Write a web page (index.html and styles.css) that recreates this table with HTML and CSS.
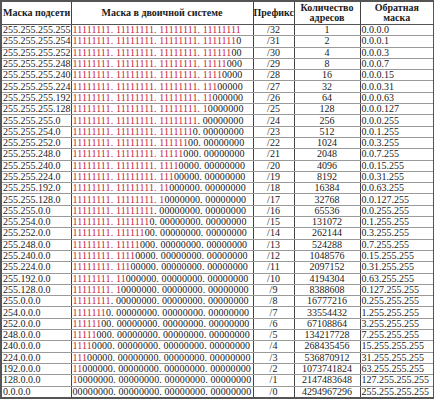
FILE: index.html
```html
<!DOCTYPE html>
<html lang="ru">
<head>
<meta charset="utf-8">
<link rel="stylesheet" href="styles.css">
</head>
<body>
<table class="masks">
<colgroup>
<col class="c1"><col class="c2"><col class="c3"><col class="c4"><col class="c5">
</colgroup>
<thead>
<tr><th class="hl">Маска подсети</th><th>Маска в двоичной системе</th><th class="hp">Префикс</th><th>Количество<br>адресов</th><th>Обратная<br>маска</th></tr>
</thead>
<tbody>
<tr><td>255.255.255.255</td><td class="bin"><span class="r">11111111. 11111111. 11111111. 11111111</span></td><td class="c">/32</td><td class="c">1</td><td>0.0.0.0</td></tr>
<tr><td>255.255.255.254</td><td class="bin"><span class="r">11111111. 11111111. 11111111. 1111111</span>0</td><td class="c">/31</td><td class="c">2</td><td>0.0.0.1</td></tr>
<tr><td>255.255.255.252</td><td class="bin"><span class="r">11111111. 11111111. 11111111. 111111</span>00</td><td class="c">/30</td><td class="c">4</td><td>0.0.0.3</td></tr>
<tr><td>255.255.255.248</td><td class="bin"><span class="r">11111111. 11111111. 11111111. 11111</span>000</td><td class="c">/29</td><td class="c">8</td><td>0.0.0.7</td></tr>
<tr><td>255.255.255.240</td><td class="bin"><span class="r">11111111. 11111111. 11111111. 1111</span>0000</td><td class="c">/28</td><td class="c">16</td><td>0.0.0.15</td></tr>
<tr><td>255.255.255.224</td><td class="bin"><span class="r">11111111. 11111111. 11111111. 111</span>00000</td><td class="c">/27</td><td class="c">32</td><td>0.0.0.31</td></tr>
<tr><td>255.255.255.192</td><td class="bin"><span class="r">11111111. 11111111. 11111111. 11</span>000000</td><td class="c">/26</td><td class="c">64</td><td>0.0.0.63</td></tr>
<tr><td>255.255.255.128</td><td class="bin"><span class="r">11111111. 11111111. 11111111. 1</span>0000000</td><td class="c">/25</td><td class="c">128</td><td>0.0.0.127</td></tr>
<tr><td>255.255.255.0</td><td class="bin"><span class="r">11111111. 11111111. 11111111</span>. 00000000</td><td class="c">/24</td><td class="c">256</td><td>0.0.0.255</td></tr>
<tr><td>255.255.254.0</td><td class="bin"><span class="r">11111111. 11111111. 1111111</span>0. 00000000</td><td class="c">/23</td><td class="c">512</td><td>0.0.1.255</td></tr>
<tr><td>255.255.252.0</td><td class="bin"><span class="r">11111111. 11111111. 111111</span>00. 00000000</td><td class="c">/22</td><td class="c">1024</td><td>0.0.3.255</td></tr>
<tr><td>255.255.248.0</td><td class="bin"><span class="r">11111111. 11111111. 11111</span>000. 00000000</td><td class="c">/21</td><td class="c">2048</td><td>0.0.7.255</td></tr>
<tr><td>255.255.240.0</td><td class="bin"><span class="r">11111111. 11111111. 1111</span>0000. 00000000</td><td class="c">/20</td><td class="c">4096</td><td>0.0.15.255</td></tr>
<tr><td>255.255.224.0</td><td class="bin"><span class="r">11111111. 11111111. 111</span>00000. 00000000</td><td class="c">/19</td><td class="c">8192</td><td>0.0.31.255</td></tr>
<tr><td>255.255.192.0</td><td class="bin"><span class="r">11111111. 11111111. 11</span>000000. 00000000</td><td class="c">/18</td><td class="c">16384</td><td>0.0.63.255</td></tr>
<tr><td>255.255.128.0</td><td class="bin"><span class="r">11111111. 11111111. 1</span>0000000. 00000000</td><td class="c">/17</td><td class="c">32768</td><td>0.0.127.255</td></tr>
<tr><td>255.255.0.0</td><td class="bin"><span class="r">11111111. 11111111</span>. 00000000. 00000000</td><td class="c">/16</td><td class="c">65536</td><td>0.0.255.255</td></tr>
<tr><td>255.254.0.0</td><td class="bin"><span class="r">11111111. 1111111</span>0. 00000000. 00000000</td><td class="c">/15</td><td class="c">131072</td><td>0.1.255.255</td></tr>
<tr><td>255.252.0.0</td><td class="bin"><span class="r">11111111. 111111</span>00. 00000000. 00000000</td><td class="c">/14</td><td class="c">262144</td><td>0.3.255.255</td></tr>
<tr><td>255.248.0.0</td><td class="bin"><span class="r">11111111. 11111</span>000. 00000000. 00000000</td><td class="c">/13</td><td class="c">524288</td><td>0.7.255.255</td></tr>
<tr><td>255.240.0.0</td><td class="bin"><span class="r">11111111. 1111</span>0000. 00000000. 00000000</td><td class="c">/12</td><td class="c">1048576</td><td>0.15.255.255</td></tr>
<tr><td>255.224.0.0</td><td class="bin"><span class="r">11111111. 111</span>00000. 00000000. 00000000</td><td class="c">/11</td><td class="c">2097152</td><td>0.31.255.255</td></tr>
<tr><td>255.192.0.0</td><td class="bin"><span class="r">11111111. 11</span>000000. 00000000. 00000000</td><td class="c">/10</td><td class="c">4194304</td><td>0.63.255.255</td></tr>
<tr><td>255.128.0.0</td><td class="bin"><span class="r">11111111. 1</span>0000000. 00000000. 00000000</td><td class="c">/9</td><td class="c">8388608</td><td>0.127.255.255</td></tr>
<tr><td>255.0.0.0</td><td class="bin"><span class="r">11111111</span>. 00000000. 00000000. 00000000</td><td class="c">/8</td><td class="c">16777216</td><td>0.255.255.255</td></tr>
<tr><td>254.0.0.0</td><td class="bin"><span class="r">1111111</span>0. 00000000. 00000000. 00000000</td><td class="c">/7</td><td class="c">33554432</td><td>1.255.255.255</td></tr>
<tr><td>252.0.0.0</td><td class="bin"><span class="r">111111</span>00. 00000000. 00000000. 00000000</td><td class="c">/6</td><td class="c">67108864</td><td>3.255.255.255</td></tr>
<tr><td>248.0.0.0</td><td class="bin"><span class="r">11111</span>000. 00000000. 00000000. 00000000</td><td class="c">/5</td><td class="c">134217728</td><td>7.255.255.255</td></tr>
<tr><td>240.0.0.0</td><td class="bin"><span class="r">1111</span>0000. 00000000. 00000000. 00000000</td><td class="c">/4</td><td class="c">268435456</td><td>15.255.255.255</td></tr>
<tr><td>224.0.0.0</td><td class="bin"><span class="r">111</span>00000. 00000000. 00000000. 00000000</td><td class="c">/3</td><td class="c">536870912</td><td>31.255.255.255</td></tr>
<tr><td>192.0.0.0</td><td class="bin"><span class="r">11</span>000000. 00000000. 00000000. 00000000</td><td class="c">/2</td><td class="c">1073741824</td><td>63.255.255.255</td></tr>
<tr><td>128.0.0.0</td><td class="bin"><span class="r">1</span>0000000. 00000000. 00000000. 00000000</td><td class="c">/1</td><td class="c">2147483648</td><td>127.255.255.255</td></tr>
<tr><td>0.0.0.0</td><td class="bin">00000000. 00000000. 00000000. 00000000</td><td class="c">/0</td><td class="c">4294967296</td><td>255.255.255.255</td></tr>
</tbody>
</table>
</body>
</html>
```
FILE: styles.css
```css
body {
  margin: 0;
  background: #fff;
  font-family: "Liberation Serif", "Times New Roman", serif;
  font-size: 10px;
  color: #1a1a1a;
}
.masks {
  border-collapse: collapse;
  table-layout: fixed;
  width: 433px;
  border: 2px solid #555;
}
.c1 { width: 70px; }
.c2 { width: 182px; }
.c3 { width: 41px; }
.c4 { width: 66px; }
.c5 { width: 74px; }
.masks th,
.masks td {
  padding: 0 1px;
  line-height: 10px;
  border-left: 1px solid #444;
  border-right: 1px solid #444;
  border-top: 1px solid #9a9a9a;
  border-bottom: 1px solid #9a9a9a;
  white-space: nowrap;
  overflow: hidden;
  text-align: left;
}
.masks td {
  height: 10.3px;
}
.masks td.bin {
  letter-spacing: 0.1px;
  padding-right: 0;
}
.masks th {
  height: 22px;
  font-weight: bold;
  text-align: center;
  vertical-align: middle;
  border-bottom: 1px solid #555;
  line-height: 10px;
}
.masks th.hl {
  text-align: left;
}
.masks th.hp {
  padding: 0;
}
.masks td.c {
  text-align: center;
}
.r {
  color: #c41e3a;
}
```
